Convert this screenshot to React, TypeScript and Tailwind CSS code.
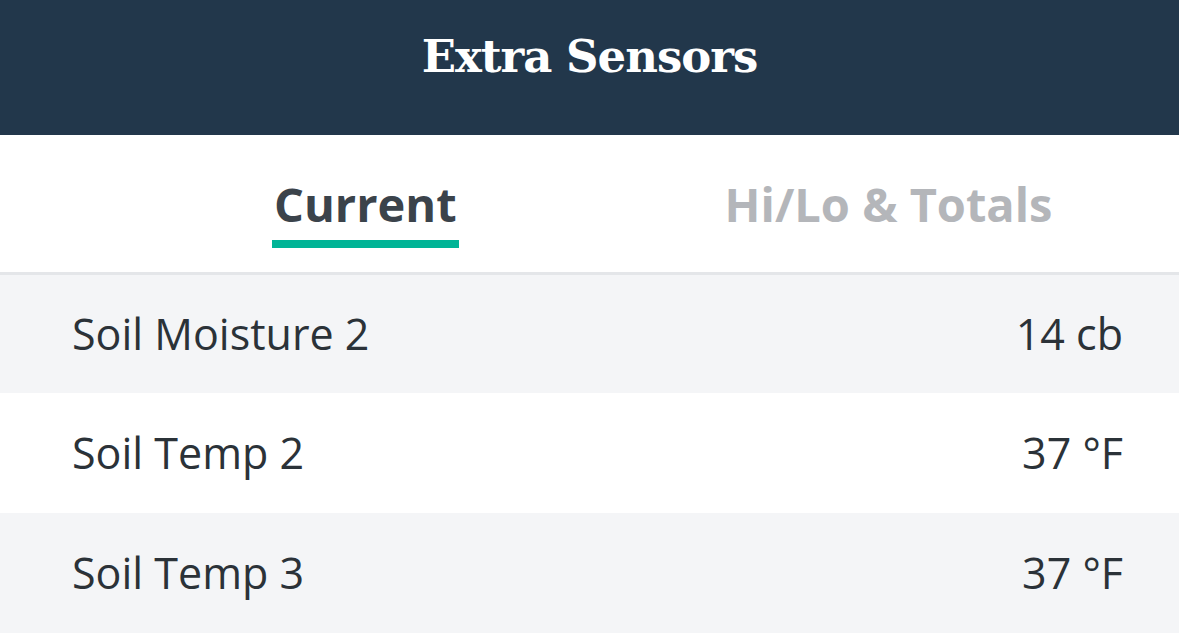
import React from "react";

const rows = [
  { name: "Soil Moisture 2", value: "14 cb", bg: "bg-[#f4f5f7]", h: "h-[118px]" },
  { name: "Soil Temp 2", value: "37 °F", bg: "bg-white", h: "h-[120px]" },
  { name: "Soil Temp 3", value: "37 °F", bg: "bg-[#f4f5f7]", h: "h-[120px]" },
];

export default function App() {
  return (
    <div className="w-[1179px] h-[642px] bg-white overflow-hidden" style={{ fontFamily: '"Open Sans", sans-serif' }}>
      <div className="h-[135px] bg-[#22374b] flex items-center justify-center">
        <h1 className="text-white text-[45px] font-bold tracking-[-1px] pb-[22px] leading-none" style={{ fontFamily: '"DejaVu Serif", serif' }}>
          Extra Sensors
        </h1>
      </div>
      <div className="h-[140px] border-b-[3px] border-[#e4e6e9] flex items-end pl-[272px] gap-[266px]">
        <div className="flex flex-col items-center">
          <span className="text-[47px] font-bold text-[#3b434b] leading-none px-[2px]">Current</span>
          <div className="mt-[12px] h-[8px] w-full bg-[#00b496] mb-[24px]" />
        </div>
        <div className="flex flex-col items-center">
          <span className="text-[47px] font-bold text-[#b4b6ba] leading-none">Hi/Lo &amp; Totals</span>
          <div className="mt-[12px] h-[8px] mb-[24px]" />
        </div>
      </div>
      {rows.map((r) => (
        <div key={r.name} className={`${r.h} ${r.bg} flex items-center justify-between pl-[72px] pr-[56px] text-[43px] text-[#2b3238]`}>
          <span>{r.name}</span>
          <span>{r.value}</span>
        </div>
      ))}
    </div>
  );
}
